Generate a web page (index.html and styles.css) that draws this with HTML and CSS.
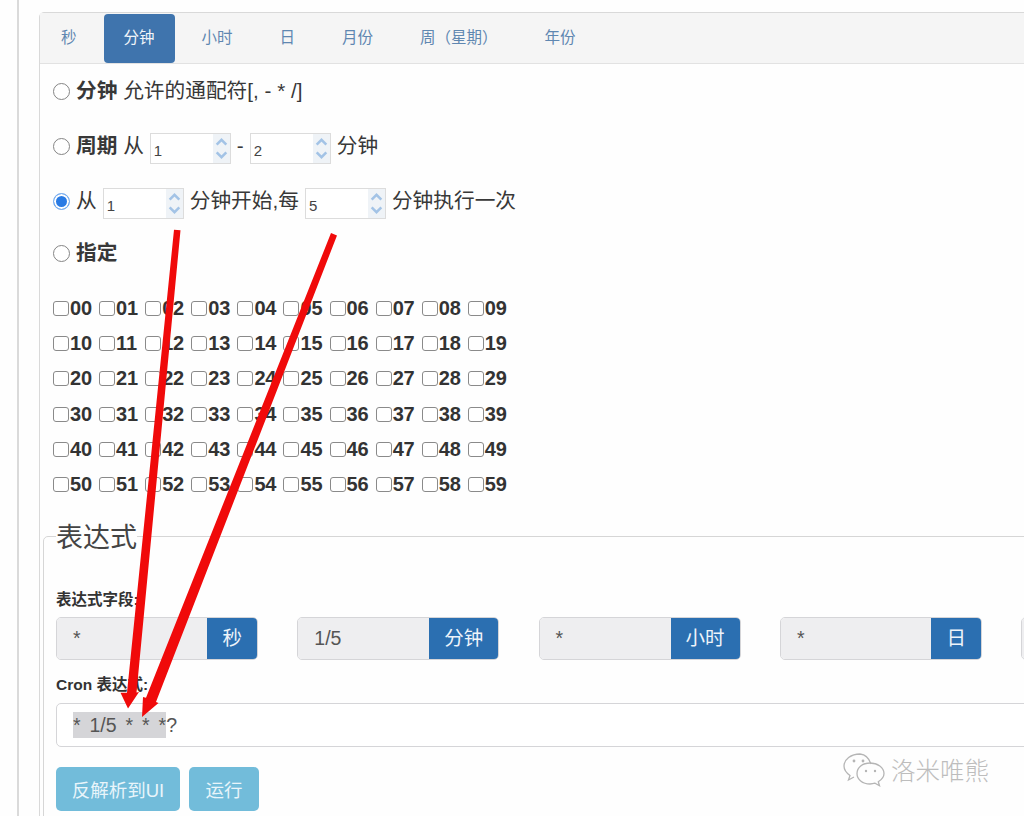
FILE: index.html
```html
<!DOCTYPE html>
<html lang="zh-CN">
<head>
<meta charset="utf-8">
<title>Cron</title>
<link rel="stylesheet" href="styles.css">
</head>
<body>
<div class="page">
  <div class="panel">
    <div class="tabs">
      <a class="tab">秒</a><a class="tab active">分钟</a><a class="tab">小时</a><a class="tab">日</a><a class="tab">月份</a><a class="tab">周（星期）</a><a class="tab">年份</a>
    </div>
    <div class="body">
      <div class="rows">
        <div class="row r1"><input type="radio" name="m" class="radio"><span><b>分钟</b> 允许的通配符[, - * /]</span></div>
        <div class="row r2"><input type="radio" name="m" class="radio"><span><b>周期</b> 从</span>
          <span class="num"><input class="num-in" type="text" value="1"><svg class="spin" viewBox="0 0 16 30"><path d="M3 11l5-5 5 5M3 19l5 5 5-5"/></svg></span>
          <span class="dash">-</span>
          <span class="num"><input class="num-in" type="text" value="2"><svg class="spin" viewBox="0 0 16 30"><path d="M3 11l5-5 5 5M3 19l5 5 5-5"/></svg></span>
          <span>分钟</span></div>
        <div class="row r3"><input type="radio" name="m" class="radio" checked><span>从</span>
          <span class="num"><input class="num-in" type="text" value="1"><svg class="spin" viewBox="0 0 16 30"><path d="M3 11l5-5 5 5M3 19l5 5 5-5"/></svg></span>
          <span>分钟开始,每</span>
          <span class="num"><input class="num-in" type="text" value="5"><svg class="spin" viewBox="0 0 16 30"><path d="M3 11l5-5 5 5M3 19l5 5 5-5"/></svg></span>
          <span>分钟执行一次</span></div>
        <div class="row r4"><input type="radio" name="m" class="radio"><b>指定</b></div>
        <div class="grid" id="grid">
          <label class="cell"><input type="checkbox" class="cb">00</label><label class="cell"><input type="checkbox" class="cb">01</label><label class="cell"><input type="checkbox" class="cb">02</label><label class="cell"><input type="checkbox" class="cb">03</label><label class="cell"><input type="checkbox" class="cb">04</label><label class="cell"><input type="checkbox" class="cb">05</label><label class="cell"><input type="checkbox" class="cb">06</label><label class="cell"><input type="checkbox" class="cb">07</label><label class="cell"><input type="checkbox" class="cb">08</label><label class="cell"><input type="checkbox" class="cb">09</label>
          <label class="cell"><input type="checkbox" class="cb">10</label><label class="cell"><input type="checkbox" class="cb">11</label><label class="cell"><input type="checkbox" class="cb">12</label><label class="cell"><input type="checkbox" class="cb">13</label><label class="cell"><input type="checkbox" class="cb">14</label><label class="cell"><input type="checkbox" class="cb">15</label><label class="cell"><input type="checkbox" class="cb">16</label><label class="cell"><input type="checkbox" class="cb">17</label><label class="cell"><input type="checkbox" class="cb">18</label><label class="cell"><input type="checkbox" class="cb">19</label>
          <label class="cell"><input type="checkbox" class="cb">20</label><label class="cell"><input type="checkbox" class="cb">21</label><label class="cell"><input type="checkbox" class="cb">22</label><label class="cell"><input type="checkbox" class="cb">23</label><label class="cell"><input type="checkbox" class="cb">24</label><label class="cell"><input type="checkbox" class="cb">25</label><label class="cell"><input type="checkbox" class="cb">26</label><label class="cell"><input type="checkbox" class="cb">27</label><label class="cell"><input type="checkbox" class="cb">28</label><label class="cell"><input type="checkbox" class="cb">29</label>
          <label class="cell"><input type="checkbox" class="cb">30</label><label class="cell"><input type="checkbox" class="cb">31</label><label class="cell"><input type="checkbox" class="cb">32</label><label class="cell"><input type="checkbox" class="cb">33</label><label class="cell"><input type="checkbox" class="cb">34</label><label class="cell"><input type="checkbox" class="cb">35</label><label class="cell"><input type="checkbox" class="cb">36</label><label class="cell"><input type="checkbox" class="cb">37</label><label class="cell"><input type="checkbox" class="cb">38</label><label class="cell"><input type="checkbox" class="cb">39</label>
          <label class="cell"><input type="checkbox" class="cb">40</label><label class="cell"><input type="checkbox" class="cb">41</label><label class="cell"><input type="checkbox" class="cb">42</label><label class="cell"><input type="checkbox" class="cb">43</label><label class="cell"><input type="checkbox" class="cb">44</label><label class="cell"><input type="checkbox" class="cb">45</label><label class="cell"><input type="checkbox" class="cb">46</label><label class="cell"><input type="checkbox" class="cb">47</label><label class="cell"><input type="checkbox" class="cb">48</label><label class="cell"><input type="checkbox" class="cb">49</label>
          <label class="cell"><input type="checkbox" class="cb">50</label><label class="cell"><input type="checkbox" class="cb">51</label><label class="cell"><input type="checkbox" class="cb">52</label><label class="cell"><input type="checkbox" class="cb">53</label><label class="cell"><input type="checkbox" class="cb">54</label><label class="cell"><input type="checkbox" class="cb">55</label><label class="cell"><input type="checkbox" class="cb">56</label><label class="cell"><input type="checkbox" class="cb">57</label><label class="cell"><input type="checkbox" class="cb">58</label><label class="cell"><input type="checkbox" class="cb">59</label>
        </div>
      </div>
      <fieldset class="expr">
        <legend class="legend">表达式</legend>
        <div class="label first">表达式字段:</div>
        <div class="fields">
          <div class="group"><div class="gval">*</div><div class="gaddon">秒</div></div>
          <div class="group"><div class="gval">1/5</div><div class="gaddon">分钟</div></div>
          <div class="group"><div class="gval">*</div><div class="gaddon">小时</div></div>
          <div class="group"><div class="gval">*</div><div class="gaddon">日</div></div>
          <div class="group"><div class="gval"></div></div>
        </div>
        <div class="label second">Cron 表达式:</div>
        <div class="cron"><span class="sel">* 1/5 * * *</span>?</div>
        <div class="buttons">
          <button class="btn wide">反解析到UI</button>
          <button class="btn">运行</button>
        </div>
      </fieldset>
    </div>
  </div>
</div>

<svg class="arrows" viewBox="0 0 1024 816" aria-hidden="true">
  <path class="arrow" d="M174 229.700L180.500 230.300L136.500 692.500L139 692L128 708.500L120.500 692.700L127 692.800Z"/>
  <path class="arrow" d="M331 233L337 235.500L156 702L158.500 703L142 717L143 697L146 697.800Z"/>
</svg>

<div class="mark">
  <svg class="mark-icon" viewBox="0 0 42 34" aria-hidden="true">
    <path d="M17 1C8 1 1 6.500 1 13c0 4 2.500 7 6 9.500L5.500 27l5.500-3M28 11C26 5 22 1.500 17 1"/>
    <path d="M27 10c-7.500 0-13 4.500-13 10.500S19.500 31 27 31c1.800 0 3.500-.3 5-.8l4.500 2.500-1.200-4C38.800 26.500 41 23.700 41 20.500 41 14.500 34.500 10 27 10z"/>
    <circle cx="11" cy="8" r="1.400"/><circle cx="20" cy="8" r="1.400"/><circle cx="23" cy="18" r="1.200"/><circle cx="32" cy="18" r="1.200"/>
  </svg>
  <span class="mark-text">洛米唯熊</span>
</div>
</body>
</html>
```
FILE: styles.css
```css
* { box-sizing: border-box; }
html, body {
  margin: 0;
  height: 816px;
  overflow: hidden;
  background: #fefefe;
}
body {
  position: relative;
  width: 1024px;
  color: #383838;
  font-family: "Liberation Sans", "Noto Sans CJK SC", sans-serif;
  font-size: 20.700px;
}
.page {
  margin-left: 17px;
  height: 816px;
  padding: 12px 0 0 20px;
  border-left: 2px solid #dadada;
}
.panel {
  width: 1200px;
  height: 900px;
  border: 1px solid #d9d9d9;
  border-radius: 5px 0 0 0;
}
.tabs {
  display: flex;
  gap: 7px;
  height: 51px;
  padding: 1px 0 0 1px;
  background: #f5f5f5;
  border-bottom: 1px solid #e2e2e2;
}
.tab {
  height: 49px;
  padding: 0 20px;
  font-size: 15.500px;
  line-height: 47px;
  color: #5f87b1;
  border-radius: 4px;
}
.tab.active {
  background: #3f74ad;
  color: #f1f5f9;
}
.body { padding-left: 3px; }
.rows { padding-left: 10px; }
.row {
  display: flex;
  align-items: center;
  height: 30px;
  line-height: 30px;
  gap: 6px;
  white-space: nowrap;
}
.r1 { margin-top: 12px; }
.r2, .r3 { margin-top: 25px; }
.r4 { margin-top: 22px; }
.radio {
  appearance: none;
  width: 17px;
  height: 17px;
  margin: 0;
  background: #fff;
  border: 1px solid #858585;
  border-radius: 50%;
}
.radio:checked {
  background: #2a7be4;
  border-color: #7fb2ef;
  box-shadow: inset 0 0 0 2px #fff;
}
.num {
  display: flex;
  align-items: stretch;
  width: 81px;
  height: 31px;
  margin-top: 4px;
  background: #fff;
  border: 1px solid #dcdcdc;
}
.num-in {
  width: 62px;
  padding: 4px 0 0 3px;
  border: 0;
  outline: 0;
  background: transparent;
  font: 15px "Liberation Sans", sans-serif;
  color: #444;
}
.spin {
  flex: 1;
  background: #eff3f7;
  fill: none;
  stroke: #a3c3e6;
  stroke-width: 2.600;
}
.dash { margin: 0; }
.grid {
  display: grid;
  grid-template-columns: repeat(10, 46.100px);
  grid-auto-rows: 35.200px;
  margin-top: 23px;
  width: 470px;
}
.cell {
  display: flex;
  align-items: center;
  font-weight: 700;
  font-size: 20px;
  letter-spacing: -.2px;
  color: #333;
}
.cb {
  appearance: none;
  width: 16px;
  height: 15px;
  margin: 0 1px 0 0;
  flex: none;
  background: #fff;
  border: 1px solid #8a8a8a;
  border-radius: 3px;
}
.expr {
  margin: 19.500px 0 0;
  width: 1150px;
  height: 340px;
  min-width: 0;
  padding: 0 12px;
  border: 1px solid #d6d6d6;
  border-radius: 5px 0 0 0;
}
.legend {
  padding: 3px 0 0;
  font-size: 27px;
  line-height: 26px;
  color: #444;
}
.label {
  font-size: 15.500px;
  font-weight: 700;
  line-height: 20px;
  color: #333;
}
.label.first { padding-top: 39.500px; }
.label.second { margin-top: 15px; }
.fields {
  display: flex;
  gap: 39.300px;
  margin-top: 7px;
}
.group {
  flex: none;
  display: flex;
  width: 202px;
  height: 43px;
  border-radius: 5px;
  overflow: hidden;
  border: 1px solid #d5d5d8;
}
.gval {
  flex: 1;
  padding-left: 16px;
  background: #eeeef0;
  font-size: 19.500px;
  line-height: 41px;
  color: #555;
}
.gaddon {
  flex: none;
  padding: 0 15px;
  background: #2b6fb1;
  color: #eef4fa;
  font-size: 19.500px;
  line-height: 40px;
}
.cron {
  margin-top: 8px;
  height: 44px;
  padding-left: 16px;
  background: #fff;
  border: 1px solid #d5d5d8;
  border-radius: 5px;
  font-size: 19.500px;
  line-height: 42px;
  color: #555;
}
.sel {
  display: inline-block;
  height: 26px;
  line-height: 26px;
  word-spacing: 3.500px;
  background: #d5d5d8;
}
.buttons {
  display: flex;
  gap: 9px;
  margin-top: 20px;
}
.btn {
  width: 70px;
  height: 44px;
  padding: 0;
  background: #72bcda;
  border: 0;
  border-radius: 5px;
  color: #e9f5fa;
  font: 18.500px "Liberation Sans", "Noto Sans CJK SC", sans-serif;
}
.btn.wide { width: 124px; }
.arrows {
  position: absolute;
  left: 0;
  top: 0;
  width: 1024px;
  height: 816px;
  pointer-events: none;
}
.arrow { fill: #f00a0a; }
.mark {
  position: absolute;
  left: 843px;
  top: 753px;
  display: flex;
  align-items: center;
  gap: 6px;
}
.mark-icon {
  width: 42px;
  height: 34px;
  fill: none;
  stroke: #b5b5b5;
  stroke-width: 1.300;
}
.mark-icon circle { fill: #b5b5b5; stroke: none; }
.mark-text {
  font-family: "Noto Sans CJK SC", sans-serif;
  font-weight: 300;
  font-size: 24.500px;
  line-height: 34px;
  color: #bdbdbd;
}
```
